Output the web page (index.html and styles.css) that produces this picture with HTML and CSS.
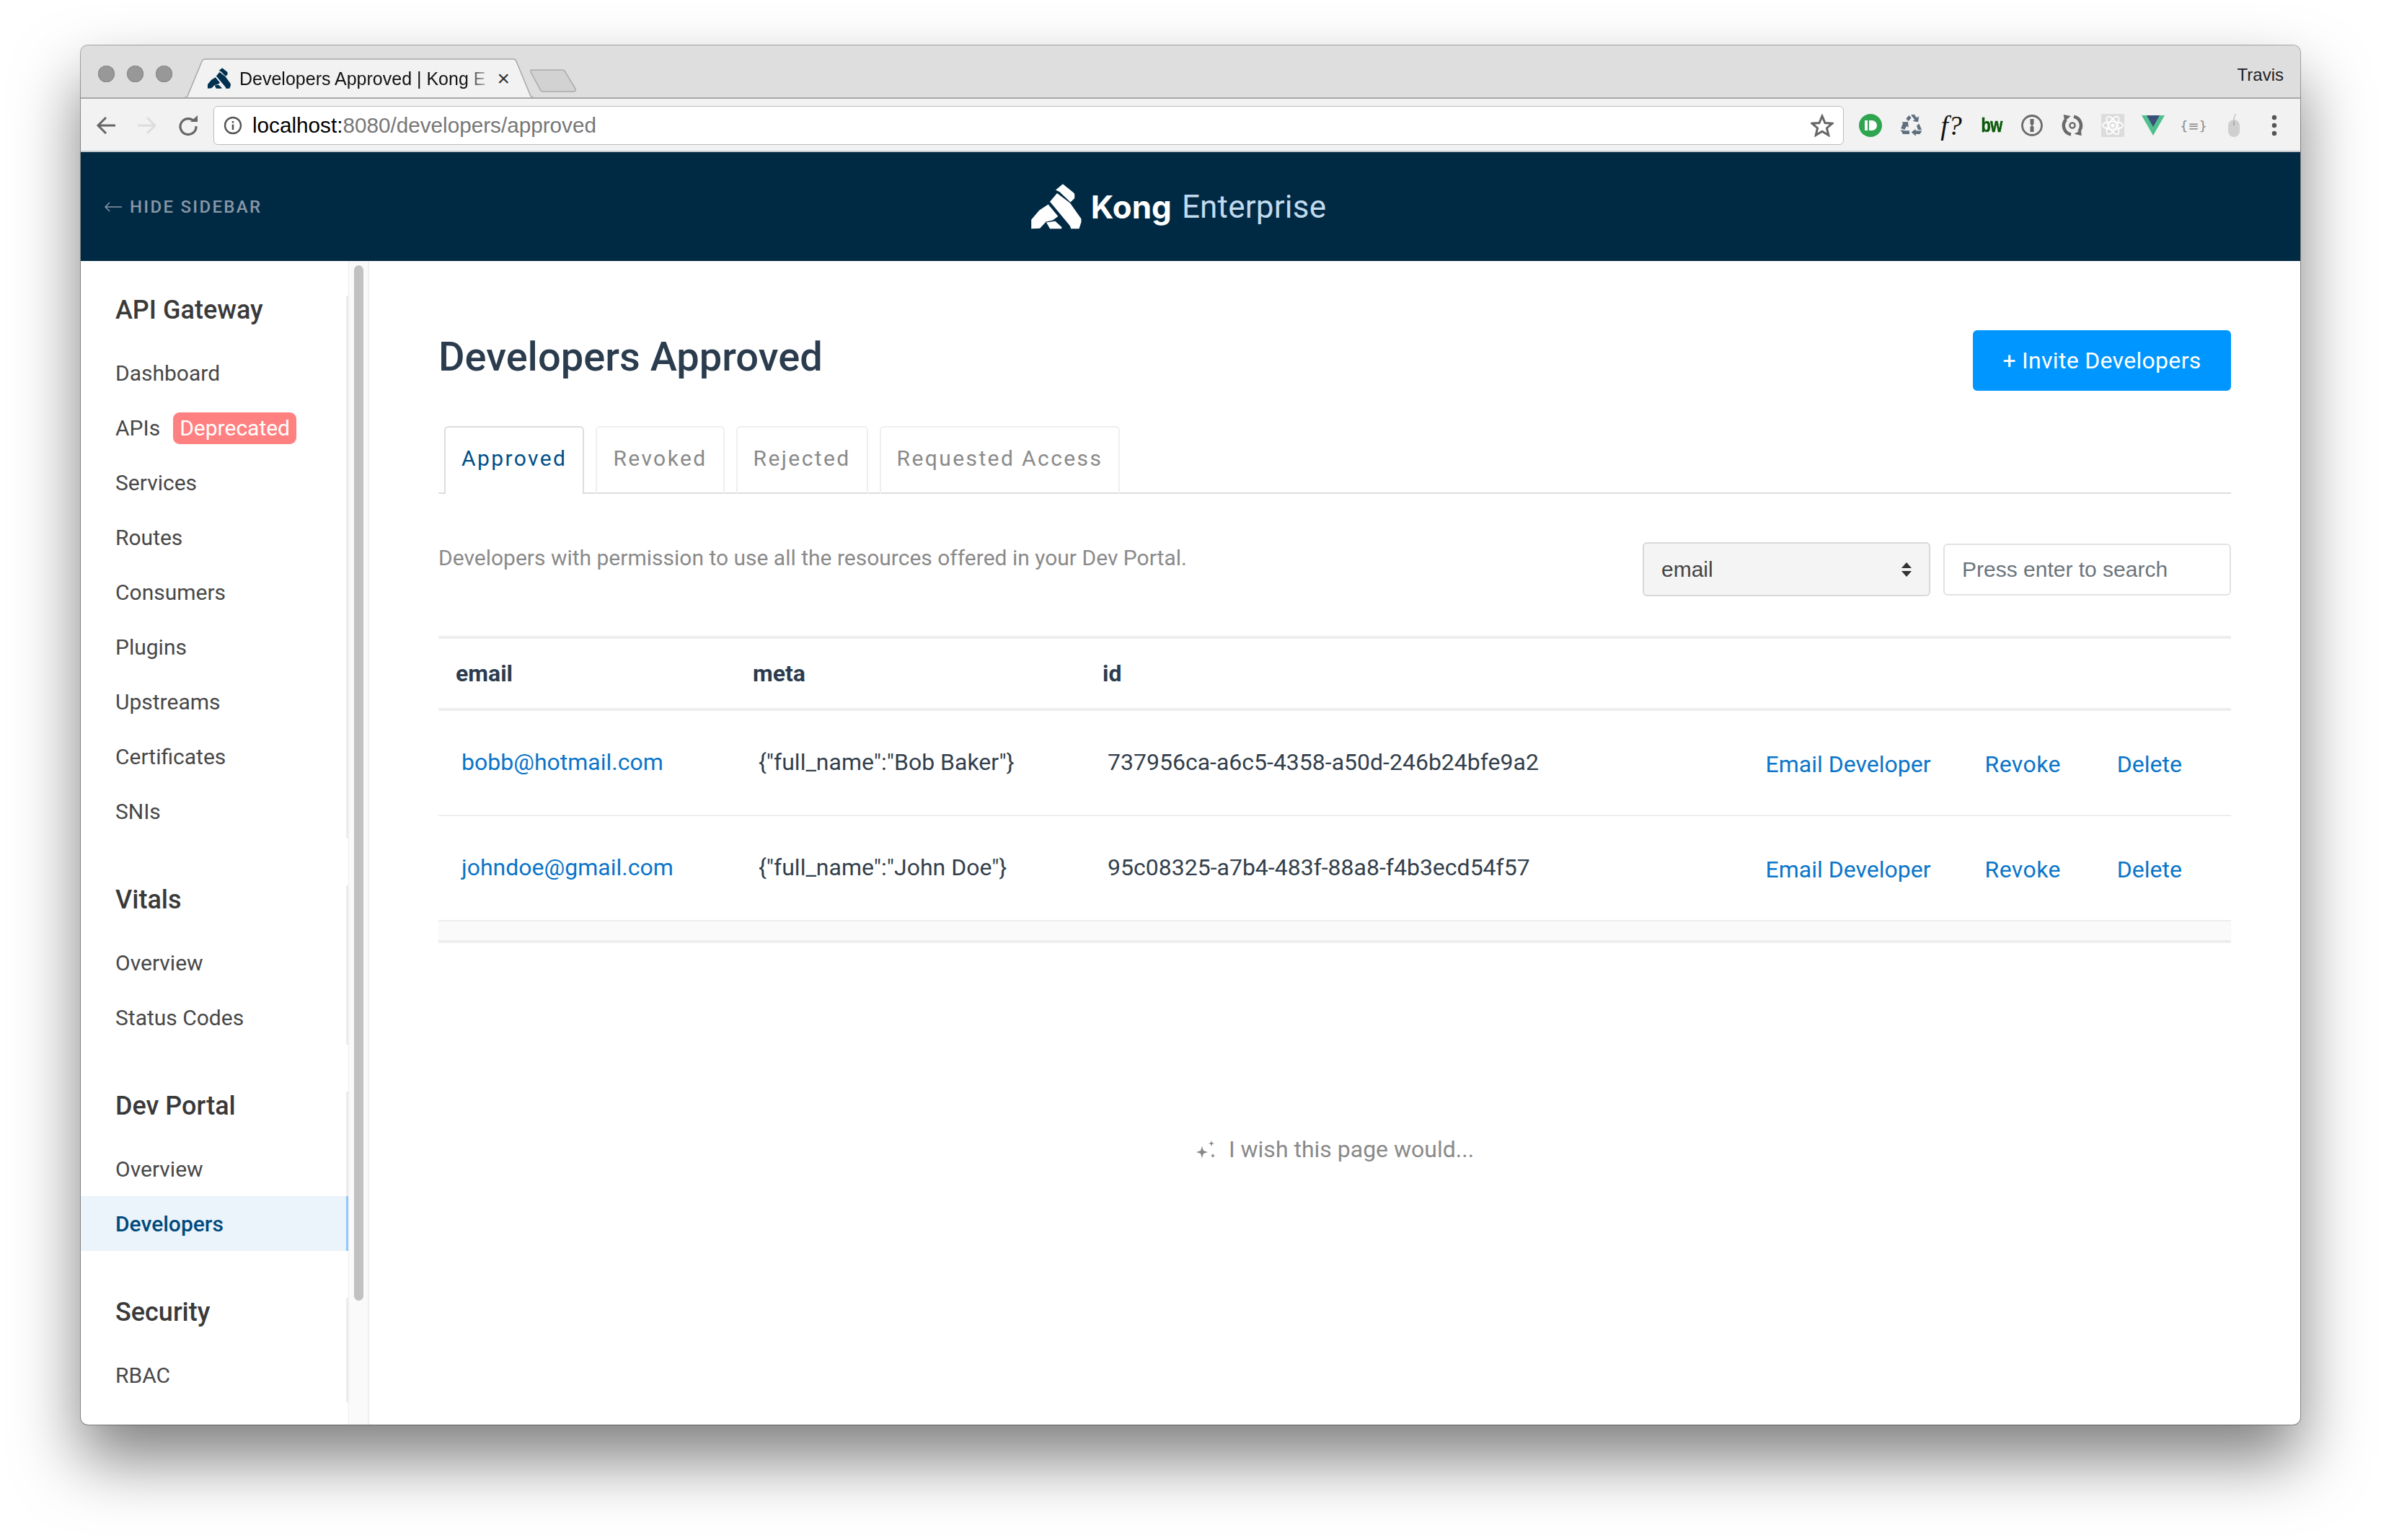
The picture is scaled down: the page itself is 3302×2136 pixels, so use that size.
FILE: index.html
```html
<!DOCTYPE html>
<html lang="en">
<head>
<meta charset="utf-8">
<title>Developers Approved | Kong Enterprise</title>
<link rel="stylesheet" href="styles.css">
</head>
<body>
<svg class="defs" width="0" height="0" aria-hidden="true"><defs>
  <path id="kong" d="M252 106 282 81 326 116 331 122 331 140 314 157 268 113ZM228 155 258 119 312 160 359 226 359 240 350 268 316 268 312 256ZM150 230 184 190 221 166 262 216 240 232 212 238 186 266 150 268ZM213 241 250 236 278 262 276 268 228 268Z"/>
</defs></svg>
<div class="window">
  <div class="tabstrip">
    <div class="lights"><i></i><i></i><i></i></div>
    <div class="tab">
      <svg class="tab-shape" viewBox="0 0 484 56" preserveAspectRatio="none"><path d="M0 55H1Q4 55 5 51L24 4Q25 1 29 1H456Q459 1 460 4L479 51Q480 55 484 55" fill="#f2f2f2" stroke="#a8a8a8" stroke-width="1.5"/></svg>
      <svg class="favicon" viewBox="150 80 210 190"><use href="#kong" fill="#00304f"/></svg>
      <span class="tab-title">Developers Approved | Kong E</span>
      <span class="tab-close">×</span>
    </div>
    <svg class="newtab" viewBox="0 0 66 32"><path d="M3 1H46Q49 1 50 4L64 27Q65 31 61 31H20Q16 31 15 28L2 4Q1 1 3 1Z" fill="#d2d2d2" stroke="#aaa" stroke-width="1.5"/></svg>
    <span class="profile">Travis</span>
  </div>
  <div class="toolbar">
    <svg class="nav" viewBox="0 0 32 32"><path d="M29 16H5M16 5 5 16 16 27" fill="none" stroke="#666" stroke-width="3"/></svg>
    <svg class="nav" viewBox="0 0 32 32"><path d="M3 16H27M16 5 27 16 16 27" fill="none" stroke="#ddd" stroke-width="3"/></svg>
    <svg class="nav" viewBox="0 0 32 32"><path d="M24 10A11 11 0 1 0 27 17" fill="none" stroke="#666" stroke-width="3.2"/><path d="M19 11H29V2Z" fill="#666"/></svg>
    <div class="urlbox">
      <svg class="info" viewBox="0 0 26 26"><circle cx="13" cy="13" r="11" fill="none" stroke="#555" stroke-width="2.4"/><path d="M13 11.5V19M13 7V9.5" stroke="#555" stroke-width="2.6"/></svg>
      <span class="url"><b>localhost:</b>8080/developers/approved</span>
      <svg class="star" viewBox="0 0 32 32"><path d="M16 3 20 12.500 30 13.200 22.400 19.700 24.800 29.500 16 24.200 7.200 29.500 9.600 19.700 2 13.200 12 12.500Z" fill="none" stroke="#666" stroke-width="3"/></svg>
    </div>
    <div class="exts">
      <span class="ext"><svg viewBox="0 0 32 32"><circle cx="16" cy="16" r="16" fill="#2fa550"/><path d="M8 9H12V23H8ZM14 9H18A7 7 0 0 1 18 23H14Z" fill="#fff"/></svg></span>
      <span class="ext"><svg viewBox="0 0 32 32" fill="#5f6f7f"><path d="M9.300 6.700 13.300 2 16.700 5.300 12.700 10ZM16 1.300 20.700.7 24 5.300 27.300 3.300 26 11.300 18.700 10 21.300 8ZM2.300 20 5 12.700 3.300 11.300 12 11 12.700 18.700 10 17 7.300 22ZM1.700 22 7.300 23.300H14V28H5ZM24 16.700 27.300 13.300 31 22H26ZM16.700 25.300 22.700 21V23.300H31.300L28.700 28H22.700V30.700Z"/></svg></span>
      <span class="ext ext-f">f?</span>
      <span class="ext ext-bw">bw</span>
      <span class="ext"><svg viewBox="0 0 32 32"><circle cx="16" cy="16" r="13.500" fill="none" stroke="#6a6a6a" stroke-width="2.800"/><path d="M13.500 7H18.500V14L16.500 16 18.500 18V25H13.500V18L15.500 16 13.500 14Z" fill="#6a6a6a"/></svg></span>
      <span class="ext"><svg viewBox="0 0 32 32"><path d="M7 8A12.500 12.500 0 0 0 14 28.500M18 3.700A12.500 12.500 0 0 1 25 24" fill="none" stroke="#6a6a6a" stroke-width="4.500"/><circle cx="16" cy="16" r="3.600" fill="none" stroke="#6a6a6a" stroke-width="2.400"/><path d="M3.700 1 13.700 3 5.300 10.300ZM28.700 30.300 18.700 27.700 28 22Z" fill="#6a6a6a"/></svg></span>
      <span class="ext"><svg viewBox="0 0 32 32"><rect width="32" height="32" fill="#dcdcdc"/><g fill="none" stroke="#fff" stroke-width="1.700"><ellipse cx="16" cy="16" rx="14" ry="5.500"/><ellipse cx="16" cy="16" rx="14" ry="5.500" transform="rotate(60 16 16)"/><ellipse cx="16" cy="16" rx="14" ry="5.500" transform="rotate(120 16 16)"/></g><circle cx="16" cy="16" r="2.600" fill="#fff"/></svg></span>
      <span class="ext"><svg viewBox="0 0 32 32"><path d="M0 2H32L16 30Z" fill="#4fc08d"/><path d="M7 2H25L16 18Z" fill="#3b4f78"/></svg></span>
      <span class="ext ext-json">{≡}</span>
      <span class="ext"><svg viewBox="0 0 32 32"><rect x="8" y="8" width="16" height="24" rx="8" fill="#cfcfcf"/><path d="M16 8V14M16 8Q16 3 19 0" fill="none" stroke="#bbb" stroke-width="1.200"/><rect x="15" y="11" width="2" height="5" fill="#aaa"/></svg></span>
      <span class="ext"><svg viewBox="0 0 32 32" fill="#555"><circle cx="16" cy="5" r="3.200"/><circle cx="16" cy="16" r="3.200"/><circle cx="16" cy="27" r="3.200"/></svg></span>
    </div>
  </div>
  <header class="appbar">
    <a class="hide"><svg class="hide-arrow" viewBox="0 0 24 14"><path d="M24 7H1M7 1 1 7 7 13" fill="none" stroke="#8997a5" stroke-width="1.500"/></svg>HIDE SIDEBAR</a>
    <div class="brand">
      <svg class="logo" viewBox="150 80 210 190"><use href="#kong" fill="#fff"/></svg>
      <span class="brand-kong">Kong</span>
      <span class="brand-ent">Enterprise</span>
    </div>
  </header>
  <div class="content">
    <nav class="sidebar">
      <section class="navgroup">
        <h3>API Gateway</h3>
        <a>Dashboard</a>
        <a>APIs<span class="badge">Deprecated</span></a>
        <a>Services</a>
        <a>Routes</a>
        <a>Consumers</a>
        <a>Plugins</a>
        <a>Upstreams</a>
        <a>Certificates</a>
        <a>SNIs</a>
      </section>
      <section class="navgroup">
        <h3>Vitals</h3>
        <a>Overview</a>
        <a>Status Codes</a>
      </section>
      <section class="navgroup">
        <h3>Dev Portal</h3>
        <a>Overview</a>
        <a class="active">Developers</a>
      </section>
      <section class="navgroup">
        <h3>Security</h3>
        <a>RBAC</a>
      </section>
    </nav>
    <div class="track"><div class="thumb"></div></div>
    <main class="main">
      <div class="page-head">
        <h1>Developers Approved</h1>
        <button class="invite">+ Invite Developers</button>
      </div>
      <div class="tabs">
        <a class="pill current">Approved</a>
        <a class="pill">Revoked</a>
        <a class="pill">Rejected</a>
        <a class="pill">Requested Access</a>
      </div>
      <div class="filter-row">
        <p class="desc">Developers with permission to use all the resources offered in your Dev Portal.</p>
        <div class="select-wrap">
          <select class="field-select"><option>email</option></select>
          <svg class="updown" viewBox="0 0 16 20"><path d="M8 0 15 8H1ZM8 20 1 12H15Z" fill="#333"/></svg>
        </div>
        <input class="search" placeholder="Press enter to search">
      </div>
      <table class="devs">
        <thead>
          <tr><th class="c-email">email</th><th class="c-meta">meta</th><th class="c-id">id</th><th></th></tr>
        </thead>
        <tbody>
          <tr>
            <td><a class="link">bobb@hotmail.com</a></td>
            <td><span>{"full_name":"Bob Baker"}</span></td>
            <td><span>737956ca-a6c5-4358-a50d-246b24bfe9a2</span></td>
            <td><div class="actions"><a>Email Developer</a><a>Revoke</a><a>Delete</a></div></td>
          </tr>
          <tr>
            <td><a class="link">johndoe@gmail.com</a></td>
            <td><span>{"full_name":"John Doe"}</span></td>
            <td><span>95c08325-a7b4-483f-88a8-f4b3ecd54f57</span></td>
            <td><div class="actions"><a>Email Developer</a><a>Revoke</a><a>Delete</a></div></td>
          </tr>
        </tbody>
      </table>
      <div class="table-foot"></div>
      <div class="wish">
        <svg class="sparkle" viewBox="0 0 30 30" fill="#888"><path d="M9 11 11 17 17 19 11 21 9 27 7 21 1 19 7 17ZM22 3 23 6 26 7 23 8 22 11 21 8 18 7 21 6ZM24 21 25 23 27 24 25 25 24 27 23 25 21 24 23 23Z"/></svg>
        <span>I wish this page would...</span>
      </div>
    </main>
  </div>
</div>
</body>
</html>
```
FILE: styles.css
```css
* { box-sizing: border-box; }
html, body { margin: 0; height: 2136px; overflow: hidden; background: #fff; }
body { padding: 63px 112px 160px; font-family: Roboto, "Liberation Sans", sans-serif; }
.defs { display: block; height: 0; }
a { text-decoration: none; }

.window {
  height: 1913px;
  display: flex;
  flex-direction: column;
  border-radius: 10px;
  overflow: hidden;
  background: #fff;
  box-shadow: 0 0 0 1px rgba(0,0,0,.32), 0 48px 90px rgba(0,0,0,.5);
}

/* browser chrome */
.tabstrip {
  height: 74px;
  flex: none;
  display: flex;
  align-items: flex-start;
  background: #dedede;
  border-bottom: 2px solid #a8a8a8;
  font-family: "Liberation Sans", Arial, sans-serif;
}
.lights { display: flex; gap: 17px; padding: 28px 0 0 24px; width: 144px; flex: none; }
.lights i { width: 23px; height: 23px; border-radius: 50%; background: #989898; box-shadow: inset 0 0 0 1px #8a8a8a; flex: none; }
.tab {
  position: relative;
  width: 484px;
  height: 55px;
  margin-top: 18px;
  flex: none;
  display: flex;
  align-items: center;
  padding: 0 0 0 32px;
}
.tab-shape { position: absolute; left: 0; top: 0; width: 100%; height: 55px; }
.favicon { position: relative; width: 32px; height: 31px; flex: none; }
.tab-title {
  position: relative;
  margin: 1px 0 0 12px;
  font-size: 25px;
  white-space: nowrap;
  color: #111;
  -webkit-mask-image: linear-gradient(90deg, #000 92%, rgba(0,0,0,.25) 100%);
  mask-image: linear-gradient(90deg, #000 92%, rgba(0,0,0,.25) 100%);
}
.tab-close { position: relative; margin-left: 16px; font-size: 30px; color: #333; line-height: 1; }
.newtab { width: 66px; height: 32px; margin: 33px 0 0 -6px; flex: none; }
.profile { margin-left: auto; padding: 27px 23px 0 0; font-size: 24px; color: #222; }

.toolbar {
  height: 74px;
  flex: none;
  display: flex;
  align-items: center;
  background: #f2f2f2;
  border-bottom: 2px solid #c4c9cd;
  padding: 2px 8px 0 19px;
}
.nav { width: 32px; height: 32px; flex: none; margin-right: 25px; }
.nav:nth-of-type(3) { margin-right: 19px; }
.urlbox {
  flex: 1;
  height: 54px;
  display: flex;
  align-items: center;
  background: #fff;
  border: 1.500px solid #bbb;
  border-radius: 6px;
  padding: 0 13px 0 13px;
  font-family: "Liberation Sans", Arial, sans-serif;
}
.info { width: 26px; height: 26px; flex: none; }
.url { margin-left: 14px; font-size: 29.700px; color: #777; }
.url b { font-weight: 400; color: #000; }
.star { width: 32px; height: 32px; margin-left: auto; }
.exts { display: flex; margin-left: 9px; }
.ext { width: 56px; height: 56px; flex: none; display: flex; align-items: center; justify-content: center; }
.ext svg { width: 32px; height: 32px; }
.ext-f { font: italic 38px "Liberation Serif", serif; color: #111; }
.ext-bw { font: 700 28px "Liberation Sans", sans-serif; color: #0b5a0b; letter-spacing: -1px; transform: scaleX(.78); -webkit-text-stroke: .6px #0b5a0b; }
.ext-json { font: 18px "DejaVu Sans", sans-serif; color: #888; }

/* app bar */
.appbar {
  height: 151px;
  flex: none;
  position: relative;
  display: flex;
  align-items: center;
  justify-content: center;
  background: #002a44;
}
.hide {
  position: absolute;
  left: 33px;
  top: 50%;
  transform: translateY(-50%);
  display: flex;
  align-items: center;
  font-size: 24px;
  font-weight: 500;
  letter-spacing: 2.300px;
  color: #8997a5;
  white-space: nowrap;
}
.hide-arrow { width: 24px; height: 14px; margin-right: 11px; flex: none; }
.brand { display: flex; align-items: center; margin-right: 33px; }
.logo { width: 70px; height: 63px; flex: none; margin-right: 13px; }
.brand-kong { font: 700 44px Inter, Roboto, sans-serif; color: #fff; margin-right: 14px; }
.brand-ent { font-size: 44px; font-weight: 400; letter-spacing: .2px; color: #c0daee; }

/* content */
.content { flex: 1; min-height: 0; display: flex; }
.sidebar { width: 371px; flex: none; padding-top: 48px; overflow: hidden; }
.navgroup { display: flex; flex-direction: column; margin-bottom: 65px; border-right: 3px solid #ececec; }
.navgroup h3 { margin: 0 0 29px; height: 40px; line-height: 40px; padding-left: 48px; font-size: 36px; font-weight: 500; color: #3a3a3a; }
.navgroup a { height: 76px; display: flex; align-items: center; padding-left: 48px; font-size: 30px; color: #484848; }
.navgroup a.active { background: #ebf3fb; color: #004a7c; font-weight: 500; margin-right: -3px; border-right: 3px solid #90c8fa; }
.badge {
  margin: 1px 0 0 18px;
  height: 44px;
  line-height: 44px;
  padding: 0 9px;
  border-radius: 9px;
  background: #ff8080;
  color: #fff;
  font-size: 30px;
}
.track { width: 29px; flex: none; padding: 6px 6px 0 7px; background: #fafafa; border-left: 1px solid #eee; border-right: 2px solid #eee; }
.thumb { height: 1436px; border-radius: 8px; background: #c1c1c1; }

.main { flex: 1; min-width: 0; padding: 96px 96px 0 96px; }
.page-head { display: flex; justify-content: space-between; align-items: flex-start; }
h1 { margin: 0; height: 84px; line-height: 74px; font-size: 56px; font-weight: 500; color: #2b3c4e; }
.invite {
  width: 358px;
  height: 84px;
  border: 0;
  border-radius: 6px;
  background: #0096ff;
  color: #fff;
  font: 400 32px Roboto, sans-serif;
  letter-spacing: .3px;
}
.tabs { display: flex; gap: 16px; margin-top: 49px; padding-left: 8px; border-bottom: 2px solid #ddd; height: 94px; }
.pill {
  height: 94px;
  padding: 24px 22px 0;
  border: 2px solid #efefef;
  border-bottom: 0;
  border-radius: 6px 6px 0 0;
  font-size: 30px;
  line-height: 38px;
  letter-spacing: 2.400px;
  color: #8a8a8a;
}
.pill.current { position: relative; background: #fff; border-color: #ddd; color: #004f88; }

.filter-row { display: flex; align-items: flex-start; padding-top: 67px; height: 197px; }
.desc { margin: 0 auto 0 0; font-size: 30px; line-height: 38px; color: #8a8a8a; padding-top: 3px; }
.select-wrap { position: relative; width: 399px; height: 75px; }
.field-select {
  appearance: none;
  -webkit-appearance: none;
  width: 100%;
  height: 100%;
  padding: 0 24px;
  background: #f4f4f4;
  border: 2px solid #d8d8d8;
  border-radius: 6px;
  font: 30px "Liberation Sans", sans-serif;
  color: #444;
}
.updown { position: absolute; right: 25px; top: 28px; width: 16px; height: 20px; }
.search {
  width: 399px;
  height: 72px;
  margin: 2px 0 0 18px;
  padding: 0 24px;
  border: 2px solid #e2e2e2;
  border-radius: 6px;
  font: 30px "Liberation Sans", sans-serif;
  color: #444;
}
.search::placeholder { color: #6c757d; opacity: 1; }

.devs { width: 100%; table-layout: fixed; border-collapse: separate; border-spacing: 0; }
.devs th {
  height: 95px;
  padding: 0 24px 1px;
  box-sizing: content-box;
  text-align: left;
  font-size: 32px;
  font-weight: 700;
  color: #2b3c4e;
  border-top: 4px solid #eee;
  border-bottom: 4px solid #eee;
}
.c-email { width: 364px; }
.c-meta { width: 437px; }
.c-id { width: 700px; }
.devs td {
  height: 142px;
  padding: 0 24px 2px;
  box-sizing: content-box;
  font-size: 32px;
  color: #333f4c;
  border-bottom: 2px solid #eee;
  white-space: nowrap;
}
.devs td > span, .devs td > .link { padding-left: 8px; }
.devs td:nth-child(3) > span { padding-left: 7px; }
.link { color: #0a75c9; }
.actions { display: flex; justify-content: flex-end; gap: 78px; padding: 6px 44px 0 0; }
.actions a { color: #0a75c9; }
.actions a:first-child { margin-right: -3px; }
.actions a:nth-child(2) { letter-spacing: .4px; }
.table-foot { height: 30px; background: #fafafa; border-bottom: 4px solid #eee; }
.wish {
  margin-top: 266px;
  display: flex;
  align-items: center;
  justify-content: center;
  gap: 16px;
  font-size: 32px;
  line-height: 40px;
  color: #8a8a8a;
}
.sparkle { width: 30px; height: 30px; flex: none; }
```
